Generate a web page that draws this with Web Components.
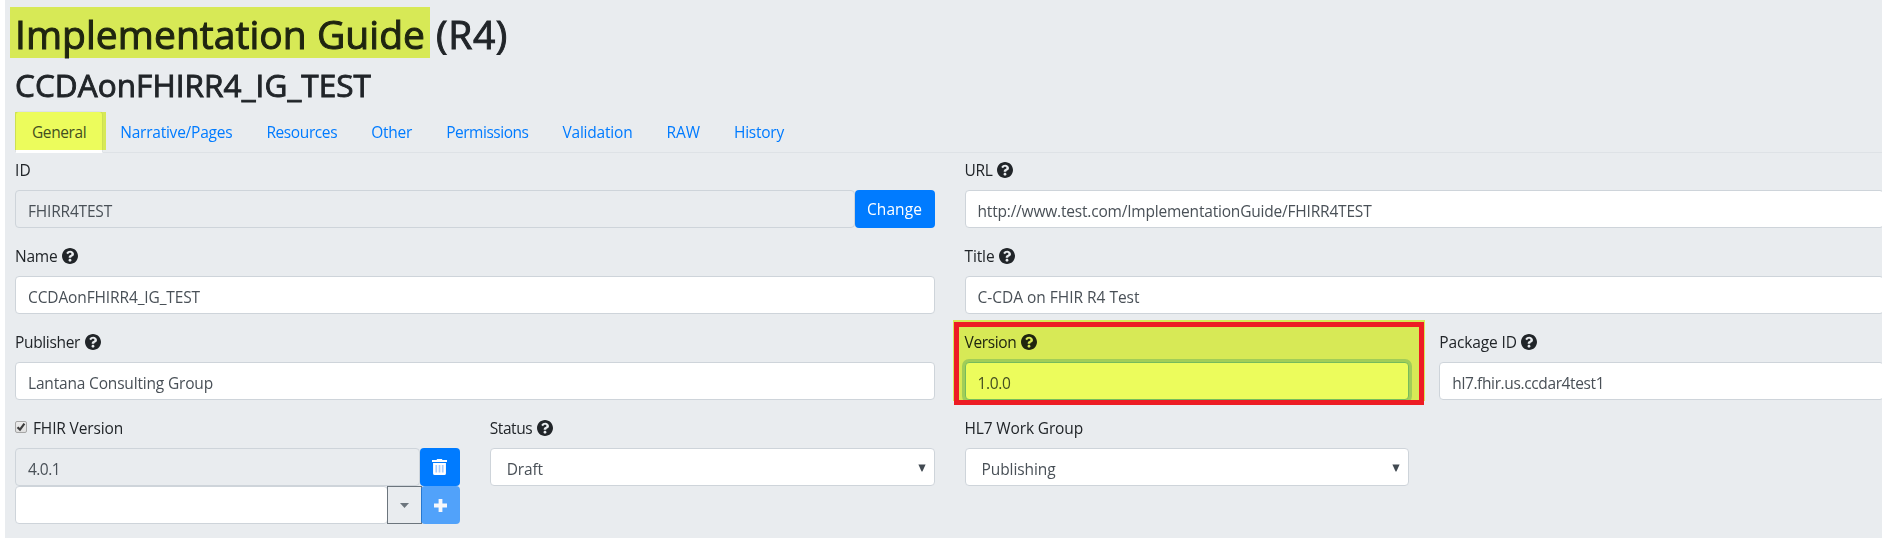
<!DOCTYPE html>
<html lang="en">
<head>
<meta charset="utf-8">
<title>Implementation Guide</title>
<style>
html,body{margin:0;height:100%;overflow:hidden;background:#fff}
body{font:15.5px/24px "Open Sans","Noto Sans",sans-serif;color:#212529}
</style>
</head>
<body>
<ig-page></ig-page>
<script>
class Base extends HTMLElement{
  connectedCallback(){
    if(this.shadowRoot)return;
    this.attachShadow({mode:'open'}).innerHTML=this.view();
    this.ready();
  }
  view(){return '<slot></slot>'}
  ready(){}
}
const define=(name,cls)=>customElements.define(name,cls);

/* Text tracked to occupy a given advance width */
define('fit-text',class extends Base{
  view(){return '<style>:host{display:inline-block;white-space:pre}span{display:inline-block}</style><span><slot></slot></span>'}
  ready(){
    const w=+this.getAttribute('w'),s=this.shadowRoot.querySelector('span');
    const n=s.getBoundingClientRect().width;
    s.style.letterSpacing=((w-n)/this.textContent.length).toFixed(4)+'px';
    this.style.width=w+'px';
  }
});

define('help-icon',class extends Base{
  view(){return `<style>:host{display:block;width:16px;height:16px}svg{display:block}</style>
  <svg width="16" height="16" viewBox="8 8 496 496" fill="currentColor"><path d="M504 256c0 136.997-111.043 248-248 248S8 392.997 8 256C8 119.083 119.043 8 256 8s248 111.083 248 248zM262.655 90c-54.497 0-89.255 22.957-116.549 63.758-3.536 5.286-2.353 12.415 2.715 16.258l34.699 26.31c5.205 3.947 12.621 3.008 16.665-2.122 17.864-22.658 30.113-35.797 57.303-35.797 20.429 0 45.698 13.148 45.698 32.958 0 14.976-12.363 22.667-32.534 33.976C247.128 238.528 216 254.941 216 296v4c0 6.627 5.373 12 12 12h56c6.627 0 12-5.373 12-12v-1.333c0-28.462 83.186-29.647 83.186-106.667 0-58.002-60.165-102-116.531-102zM256 338c-25.365 0-46 20.635-46 46 0 25.364 20.635 46 46 46s46-20.636 46-46c0-25.364-20.635-46-46-46z"/></svg>`}
});

/* A labelled form group: label row, then the slotted control */
define('form-field',class extends Base{
  view(){
    const help=this.hasAttribute('help')?'<help-icon></help-icon>':'';
    const box=this.hasAttribute('checked')?`<svg class="box" width="12" height="12" viewBox="0 0 12 12"><defs><linearGradient id="g" x2="0" y2="1"><stop stop-color="#ededed"/><stop offset="1" stop-color="#dedede"/></linearGradient></defs><rect x=".5" y=".5" width="11" height="11" rx="1.5" fill="url(#g)" stroke="#a6a6a6"/><path d="M2.5 6.2 5 8.6 9.4 2.7" fill="none" stroke="#3c3c3c" stroke-width="2.2"/></svg>`:'';
    return `<style>:host{display:block;position:relative;min-width:0}
    label{display:flex;height:24px;margin-bottom:8px}
    help-icon{margin:4px 0 0 4.5px}.box{margin:5px 6px 0 0}</style>
    <label>${box}<fit-text w="${this.getAttribute('w')}">${this.getAttribute('label')}</fit-text>${help}</label><slot></slot><slot name="note"></slot>`}
});

define('text-box',class extends Base{
  view(){return `<style>:host{display:block;box-sizing:border-box;flex:1;height:38px;padding:7.500px 12px 0;border:1px solid #ced4da;border-radius:4px;background:#fff;color:#495057}
  :host([readonly]){background:#e9ecef}
  :host([focused]){border-color:#80bdff;box-shadow:0 0 0 3px rgba(0,123,255,.25)}</style><slot></slot>`}
});

define('select-box',class extends Base{
  view(){return `<style>:host{display:flex;justify-content:space-between;box-sizing:border-box;height:38px;padding:7.500px 8px 0 16px;border:1px solid #ced4da;border-radius:4px;background:#fff;color:#495057}
  svg{margin-top:7px}</style><slot></slot><svg width="8" height="8" viewBox="0 0 8 8"><path d="M.4.5h7.2L4.4 7.4h-.8z" fill="#424a52"/></svg>`}
});

define('app-button',class extends Base{
  view(){return `<style>:host{display:flex;align-items:center;justify-content:center;box-sizing:border-box;height:38px;background:#007bff;color:#fff;border-radius:4px}
  :host([disabled]){opacity:.65}
  :host([toggle]){background:#e9ecef;border:1px solid #6c757d;border-radius:0;position:relative}</style><slot></slot>`}
});

define('input-row',class extends Base{
  view(){return '<style>:host{display:flex}</style><slot></slot>'}
});

define('nav-tab',class extends Base{
  view(){return `<style>:host{display:block;box-sizing:border-box;height:42px;padding:8px 16px;border:1px solid transparent;border-radius:4px 4px 0 0;color:#007bff;position:relative}
  :host([active]){background:#fff;color:#495057;border-color:#dee2e6 #dee2e6 #fff}</style><slot></slot><slot name="note"></slot>`}
});
define('nav-tabs',class extends Base{
  view(){return '<style>:host{display:flex;height:41px;border-bottom:1px solid #dee2e6}</style><slot></slot>'}
});

/* Highlighter and frame annotations laid over the page */
define('marker-note',class extends Base{
  view(){return '<style>:host{display:block;position:absolute;background:#ecfc5c;mix-blend-mode:multiply;pointer-events:none}</style>'}
});
define('frame-note',class extends Base{
  view(){return '<style>:host{display:block;position:absolute;box-sizing:border-box;border:5px solid #ed1c24;pointer-events:none}</style>'}
});

define('ig-page',class extends Base{
  view(){return `<style>
  :host{display:block;box-sizing:border-box;margin-left:5px;width:1877px;height:538px;padding:10px 0 0 10px;background:#e9ecef;overflow:hidden}
  h1,h2{margin:0;font-weight:400;position:relative;-webkit-text-stroke:1px currentColor}
  h1{font-size:39px;line-height:48px;margin-bottom:8px;display:flex;gap:11px}
  h2{font-size:31.5px;line-height:38px;margin-bottom:7px;-webkit-text-stroke-width:.9px}
  nav-tabs{margin-bottom:5px}
  .grid{display:grid;width:1869px;grid-template-columns:repeat(4,1fr);gap:16px 30px}
  .half{grid-column:span 2}
  .mark-title{left:-5px;top:-3px;width:420px;height:51px}
  .mark-tab{left:-1px;top:0;width:91px;height:38px}
  .mark-version{left:-11.5px;top:-10px;width:472px;height:81px}
  .frame-version{left:-10.5px;top:-8px;width:470px;height:83px}
  svg{display:block}
  </style>
  <h1><fit-text w="410">Implementation Guide</fit-text><fit-text w="72">(R4)</fit-text><marker-note class="mark-title"></marker-note></h1>
  <h2><fit-text w="356">CCDAonFHIRR4_IG_TEST</fit-text></h2>
  <nav-tabs>
    <nav-tab active><fit-text w="54.200">General</fit-text><marker-note slot="note" class="mark-tab"></marker-note></nav-tab>
    <nav-tab><fit-text w="112.2">Narrative/Pages</fit-text></nav-tab>
    <nav-tab><fit-text w="70.800">Resources</fit-text></nav-tab>
    <nav-tab><fit-text w="41">Other</fit-text></nav-tab>
    <nav-tab><fit-text w="82.3">Permissions</fit-text></nav-tab>
    <nav-tab><fit-text w="70">Validation</fit-text></nav-tab>
    <nav-tab><fit-text w="33.5">RAW</fit-text></nav-tab>
    <nav-tab><fit-text w="50">History</fit-text></nav-tab>
  </nav-tabs>
  <div class="grid">
    <form-field class="half" label="ID" w="16"><input-row><text-box readonly><fit-text w="84">FHIRR4TEST</fit-text></text-box><app-button style="width:80px"><fit-text w="55">Change</fit-text></app-button></input-row></form-field>
    <form-field class="half" label="URL" w="28" help><text-box><fit-text w="394">http://www.test.com/ImplementationGuide/FHIRR4TEST</fit-text></text-box></form-field>
    <form-field class="half" label="Name" w="42.5" help><text-box><fit-text w="172">CCDAonFHIRR4_IG_TEST</fit-text></text-box></form-field>
    <form-field class="half" label="Title" w="30" help><text-box><fit-text w="162">C-CDA on FHIR R4 Test</fit-text></text-box></form-field>
    <form-field class="half" label="Publisher" w="65" help><text-box><fit-text w="185">Lantana Consulting Group</fit-text></text-box></form-field>
    <form-field label="Version" w="52" help><text-box focused><fit-text w="33">1.0.0</fit-text></text-box><marker-note slot="note" class="mark-version"></marker-note><frame-note slot="note" class="frame-version"></frame-note></form-field>
    <form-field label="Package ID" w="77.5" help><text-box><fit-text w="152">hl7.fhir.us.ccdar4test1</fit-text></text-box></form-field>
    <form-field label="FHIR Version" w="90" checked>
      <input-row><text-box readonly><fit-text w="32">4.0.1</fit-text></text-box><app-button style="width:40px"><svg width="15" height="16" viewBox="0 0 14 16" preserveAspectRatio="none"><path d="M0 1h4.5V0h5v1H14v2H0zM1 4h12v10.5a1.5 1.5 0 0 1-1.5 1.5h-9A1.5 1.5 0 0 1 1 14.500z" fill="#fff"/><path d="M4 6v7.500M7 6v7.500M10 6v7.500" stroke="#a8cdff" stroke-width="1.600"/></svg></app-button></input-row>
      <input-row><text-box></text-box><app-button toggle style="width:35px;margin:0 -1px"><svg width="9" height="5" viewBox="0 0 9 5"><path d="M0 0h9L4.500 5z" fill="#6c757d"/></svg></app-button><app-button disabled style="width:39px"><svg width="13" height="13" viewBox="0 0 13 13"><path d="M6.500 1.900v9.200M1.900 6.500h9.200" stroke="#fff" stroke-width="3.800" stroke-linecap="square"/></svg></app-button></input-row>
    </form-field>
    <form-field label="Status" w="42.5" help><select-box><fit-text w="36">Draft</fit-text></select-box></form-field>
    <form-field label="HL7 Work Group" w="118.500"><select-box><fit-text w="74">Publishing</fit-text></select-box></form-field>
  </div>`}
});
</script>
</body>
</html>
